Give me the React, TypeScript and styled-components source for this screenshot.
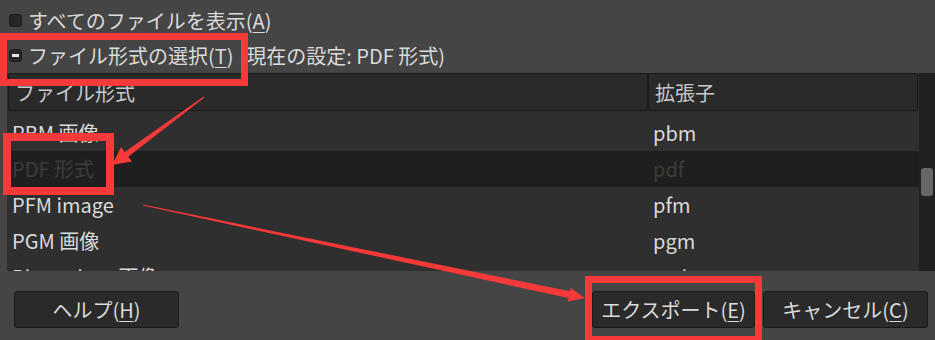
import React from "react";
import styled, { createGlobalStyle } from "styled-components";

const GlobalStyle = createGlobalStyle`
  html, body {
    margin: 0;
    padding: 0;
    background: #454545;
  }
  body {
    font-family: "Noto Sans CJK JP", "Noto Sans", sans-serif;
    font-size: 20px;
    color: #dadada;
    overflow: hidden;
  }
`;

const Dialog = styled.div`
  position: relative;
  width: 935px;
  height: 340px;
  display: flex;
  flex-direction: column;
  background: #454545;
`;

const Options = styled.div`
  display: flex;
  flex-direction: column;
  padding: 3px 0 0 9px;
`;

const OptionRow = styled.div`
  display: flex;
  align-items: center;
  height: 35px;
  white-space: nowrap;
`;

const Check = styled.span<{ $mixed?: boolean }>`
  width: 13px;
  height: 13px;
  box-sizing: border-box;
  border: 1px solid #1c1c1c;
  border-radius: 3px;
  background: #272727;
  margin-right: 6px;
  display: flex;
  align-items: center;
  justify-content: center;
  &::after {
    content: "";
    display: ${(p) => (p.$mixed ? "block" : "none")};
    width: 7px;
    height: 3px;
    background: #e6e6e6;
  }
`;

const Label = styled.span`
  line-height: 24px;
`;

const Note = styled.span`
  margin-left: 6px;
  line-height: 24px;
`;

const Key = styled.u`
  text-decoration-thickness: 1px;
  text-underline-offset: 3px;
`;

const Frame = styled.div`
  display: flex;
  height: 198px;
  margin-left: 7px;
`;

const List = styled.div`
  flex: 1;
  display: flex;
  flex-direction: column;
  background: #2f2f2f;
  overflow: hidden;
`;

const Header = styled.div`
  display: flex;
  height: 38px;
  padding: 0 1px;
  flex-shrink: 0;
`;

const HeadCell = styled.div<{ $w?: number }>`
  ${(p) => (p.$w ? `width: ${p.$w}px;` : "flex: 1;")}
  box-sizing: border-box;
  display: flex;
  align-items: center;
  padding-left: 6px;
  background: #2a2a2a;
  border: 1px solid #1a1a1a;
  border-radius: 2px;
  color: #c9c9c9;
`;

const Body = styled.div`
  padding-top: 4px;
`;

const Row = styled.div<{ $selected?: boolean }>`
  display: grid;
  grid-template-columns: 641px 1fr;
  height: 36px;
  align-items: center;
  background: ${(p) => (p.$selected ? "#1f1f1f" : "transparent")};
  color: ${(p) => (p.$selected ? "#3c3c3c" : "#dadada")};
`;

const Cell = styled.span`
  padding-left: 5px;
  white-space: nowrap;
  line-height: 24px;
`;

const ScrollTrack = styled.div`
  width: 16px;
  background: #212121;
  display: flex;
  flex-direction: column;
  align-items: center;
  padding-top: 95px;
  box-sizing: border-box;
`;

const Thumb = styled.div`
  width: 12px;
  height: 28px;
  border-radius: 3px;
  background: #676767;
`;

const Buttons = styled.div`
  display: flex;
  align-items: flex-start;
  padding: 20px 7px 0 14px;
  gap: 8px;
`;

const Spacer = styled.div`
  flex: 1;
`;

const Button = styled.button<{ $w: number }>`
  width: ${(p) => p.$w}px;
  height: 37px;
  box-sizing: border-box;
  border: 1px solid #1a1a1a;
  border-radius: 3px;
  background: #2a2a2a;
  color: #dadada;
  font: inherit;
  line-height: 24px;
  padding: 0;
  display: flex;
  align-items: center;
  justify-content: center;
`;

const Marks = styled.svg`
  position: absolute;
  left: 0;
  top: 0;
  pointer-events: none;
`;

const rows = [
  { name: "PBM 画像", ext: "pbm" },
  { name: "PDF 形式", ext: "pdf", selected: true },
  { name: "PFM image", ext: "pfm" },
  { name: "PGM 画像", ext: "pgm" },
  { name: "Photoshop 画像", ext: "psd" },
];

const RED = "#f63a3a";

const App: React.FC = () => {
  return (
    <>
      <GlobalStyle />
      <Dialog>
        <Options>
          <OptionRow>
            <Check />
            <Label>
              すべてのファイルを表示(<Key>A</Key>)
            </Label>
          </OptionRow>
          <OptionRow>
            <Check $mixed />
            <Label>
              ファイル形式の選択(<Key>T</Key>)
            </Label>
            <Note>(現在の設定: PDF 形式)</Note>
          </OptionRow>
        </Options>
        <Frame>
          <List>
            <Header>
              <HeadCell $w={640}>ファイル形式</HeadCell>
              <HeadCell>拡張子</HeadCell>
            </Header>
            <Body>
              {rows.map((r) => (
                <Row key={r.ext} $selected={r.selected}>
                  <Cell>{r.name}</Cell>
                  <Cell>{r.ext}</Cell>
                </Row>
              ))}
            </Body>
          </List>
          <ScrollTrack>
            <Thumb />
          </ScrollTrack>
        </Frame>
        <Buttons>
          <Button $w={165}>
            ヘルプ(<Key>H</Key>)
          </Button>
          <Spacer />
          <Button $w={163}>
            エクスポート(<Key>E</Key>)
          </Button>
          <Button $w={165}>
            キャンセル(<Key>C</Key>)
          </Button>
        </Buttons>

        <Marks width="935" height="340" viewBox="0 0 935 340">
          <g fill="none" stroke={RED}>
            <rect x="3.5" y="36.5" width="241" height="46" strokeWidth="7" />
            <rect x="7" y="137" width="103" height="54" strokeWidth="8" />
            <rect x="588.5" y="279.5" width="170" height="60" strokeWidth="7" />
          </g>
          <g fill={RED}>
            <polygon points="203.6,96.4 124.7,151.9 121,147 112,165 132,161.6 128.3,156.7 204.4,97.6" />
            <polygon points="143,204.6 570,291.3 570.7,287.9 585,298 567.9,301.5 568.6,298.1 143,205.6" />
          </g>
        </Marks>
      </Dialog>
    </>
  );
};

export default App;
